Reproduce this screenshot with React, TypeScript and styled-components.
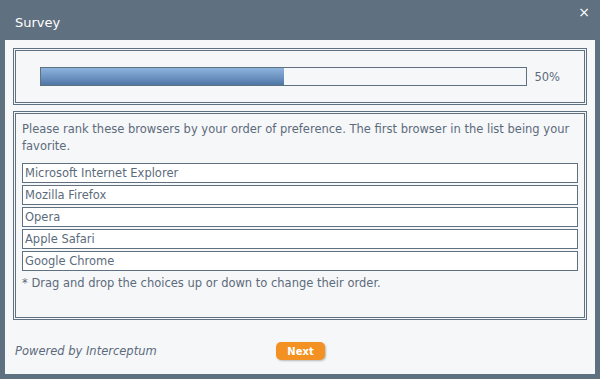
import * as React from 'react'
import styled, { createGlobalStyle } from 'styled-components'

const slate = '#5f7080'
const text = '#5c6b7b'

const GlobalStyle = createGlobalStyle`
  html, body {
    margin: 0;
    padding: 0;
    background: ${slate};
  }
  body {
    font-family: 'DejaVu Sans', Verdana, sans-serif;
    font-size: 11.5px;
    color: ${text};
  }
`

const Dialog = styled.div`
  width: 600px;
  height: 379px;
  background: ${slate};
  display: flex;
  flex-direction: column;
  box-sizing: border-box;
  padding: 0 5px 5px;
`

const TitleBar = styled.div`
  height: 40px;
  display: flex;
  align-items: center;
  justify-content: space-between;
  padding: 4px 5px 0 10px;
  box-sizing: border-box;
`

const Title = styled.span`
  color: #ffffff;
  font-size: 13px;
`

const Close = styled.span`
  color: #ffffff;
  font-size: 14px;
  line-height: 1;
  align-self: flex-start;
  margin-top: 1px;
`

const Body = styled.div`
  flex: 1;
  background: #f6f7f9;
  display: flex;
  flex-direction: column;
  padding: 8px 8px 0;
  gap: 6px;
`

const Frame = styled.div`
  border: 3px double ${slate};
  box-sizing: border-box;
`

const ProgressFrame = styled(Frame)`
  height: 57px;
  display: flex;
  align-items: center;
  padding: 0 24px;
  gap: 7px;
`

const Track = styled.div`
  flex: 1;
  height: 17px;
  border: 1px solid ${slate};
  background: #f6f7f9;
`

const Fill = styled.div`
  height: 100%;
  background: linear-gradient(#8db4dd, #6f95c3 50%, #4e77a6);
`

const Percent = styled.span`
  color: ${text};
`

const QuestionFrame = styled(Frame)`
  height: 209px;
  padding: 7px 6px 0;
`

const Prompt = styled.p`
  margin: 0 0 8px;
  line-height: 17px;
`

const Choices = styled.ul`
  list-style: none;
  margin: 0;
  padding: 0;
  display: flex;
  flex-direction: column;
  gap: 2px;
`

const Choice = styled.li`
  height: 20px;
  box-sizing: border-box;
  border: 1px solid ${slate};
  background: #ffffff;
  padding: 0 2px;
  line-height: 18px;
  cursor: move;
`

const Note = styled.p`
  margin: 4px 0 0;
  line-height: 17px;
`

const Footer = styled.div`
  flex: 1;
  display: flex;
  align-items: center;
  padding: 2px 0 0 2px;
`

const Powered = styled.em`
  width: 261px;
`

const NextButton = styled.button`
  height: 18px;
  width: 49px;
  border: none;
  border-radius: 5px;
  background: #f39223;
  color: #ffffff;
  font-family: 'DejaVu Sans', Verdana, sans-serif;
  font-weight: bold;
  font-size: 10px;
  padding: 0;
  box-shadow: 1px 1px 2px rgba(0, 0, 0, 0.25);
`

const browsers = [
  'Microsoft Internet Explorer',
  'Mozilla Firefox',
  'Opera',
  'Apple Safari',
  'Google Chrome',
]

export default function App() {
  const progress = 50
  return (
    <>
      <GlobalStyle />
      <Dialog>
        <TitleBar>
          <Title>Survey</Title>
          <Close>×</Close>
        </TitleBar>
        <Body>
          <ProgressFrame>
            <Track>
              <Fill style={{ width: `${progress}%` }} />
            </Track>
            <Percent>{progress}%</Percent>
          </ProgressFrame>
          <QuestionFrame>
            <Prompt>
              Please rank these browsers by your order of preference. The first browser in the list being your favorite.
            </Prompt>
            <Choices>
              {browsers.map((b) => (
                <Choice key={b}>{b}</Choice>
              ))}
            </Choices>
            <Note>* Drag and drop the choices up or down to change their order.</Note>
          </QuestionFrame>
          <Footer>
            <Powered>Powered by Interceptum</Powered>
            <NextButton>Next</NextButton>
          </Footer>
        </Body>
      </Dialog>
    </>
  )
}
